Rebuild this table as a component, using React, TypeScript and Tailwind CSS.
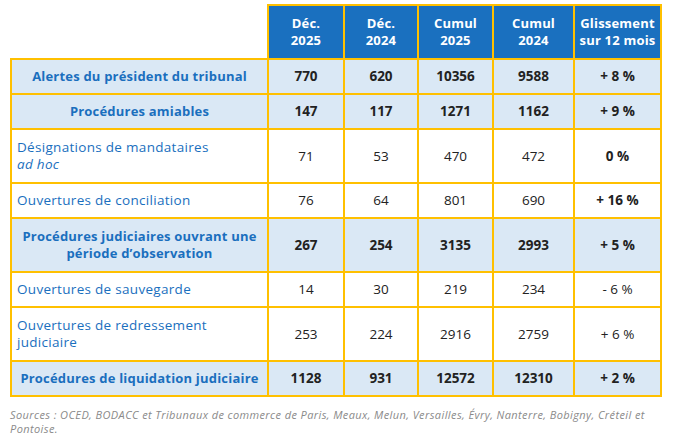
type Row = {
  label: React.ReactNode;
  values: string[];
  strong?: boolean;
  tall?: boolean;
};

const rows: Row[] = [
  { label: "Alertes du président du tribunal", values: ["770", "620", "10356", "9588", "+ 8 %"], strong: true },
  { label: "Procédures amiables", values: ["147", "117", "1271", "1162", "+ 9 %"], strong: true },
  {
    label: (
      <>
        Désignations de mandataires
        <br />
        <i>ad hoc</i>
      </>
    ),
    values: ["71", "53", "470", "472", "0 %"],
    tall: true,
  },
  { label: "Ouvertures de conciliation", values: ["76", "64", "801", "690", "+ 16 %"] },
  {
    label: (
      <>
        Procédures judiciaires ouvrant une
        <br />
        période d’observation
      </>
    ),
    values: ["267", "254", "3135", "2993", "+ 5 %"],
    strong: true,
    tall: true,
  },
  { label: "Ouvertures de sauvegarde", values: ["14", "30", "219", "234", "- 6 %"] },
  {
    label: (
      <>
        Ouvertures de redressement
        <br />
        judiciaire
      </>
    ),
    values: ["253", "224", "2916", "2759", "+ 6 %"],
    tall: true,
  },
  { label: "Procédures de liquidation judiciaire", values: ["1128", "931", "12572", "12310", "+ 2 %"], strong: true },
];

const headers = [
  ["Déc.", "2025"],
  ["Déc.", "2024"],
  ["Cumul", "2025"],
  ["Cumul", "2024"],
  ["Glissement", "sur 12 mois"],
];

const colWidths = ["w-[257px]", "w-[76px]", "w-[74px]", "w-[75px]", "w-[81px]", "w-[87px]"];

export default function App() {
  return (
    <div className="w-[675px] h-[440px] bg-white pt-[4px] pl-[10px] font-['Open_Sans',sans-serif]">
      <table className="border-collapse table-fixed w-[651px]">
        <colgroup>
          {colWidths.map((w, i) => (
            <col key={i} className={w} />
          ))}
        </colgroup>
        <thead>
          <tr className="h-[54px]">
            <th />
            {headers.map(([a, b], i) => (
              <th
                key={i}
                className="border-2 border-[#FFC000] bg-[#1A70BF] text-white text-[13px] tracking-[0.2px] font-bold leading-[17px] text-center"
              >
                {a}
                <br />
                {b}
              </th>
            ))}
          </tr>
        </thead>
        <tbody>
          {rows.map((r, i) => (
            <tr key={i} className={r.tall ? "h-[54px]" : "h-[35px]"}>
              <td
                className={
                  r.strong
                    ? "border-2 border-[#FFC000] bg-[#DAE8F5] text-[#1A6FBE] text-[13px] tracking-[0.2px] font-bold leading-[17px] text-center"
                    : "border-2 border-[#FFC000] text-[#1A6FBE] text-[13.5px] tracking-[0.3px] leading-[17px] pl-[5px]"
                }
              >
                {r.label}
              </td>
              {r.values.map((v, j) => (
                <td
                  key={j}
                  className={
                    r.strong
                      ? "border-2 border-[#FFC000] bg-[#DAE8F5] text-[#222222] text-[13.5px] font-bold text-center"
                      : "border-2 border-[#FFC000] text-[#222222] text-[13.5px] text-center" +
                        (j === 4 && (v === "0 %" || v === "+ 16 %") ? " font-bold" : "")
                  }
                >
                  {v}
                </td>
              ))}
            </tr>
          ))}
        </tbody>
      </table>
      <p className="mt-[11px] w-[645px] text-[11px] tracking-[0.4px] leading-[14px] italic text-[#8A8A8A]">
        Sources : OCED, BODACC et Tribunaux de commerce de Paris, Meaux, Melun, Versailles, Évry, Nanterre, Bobigny, Créteil et
        Pontoise.
      </p>
    </div>
  );
}
